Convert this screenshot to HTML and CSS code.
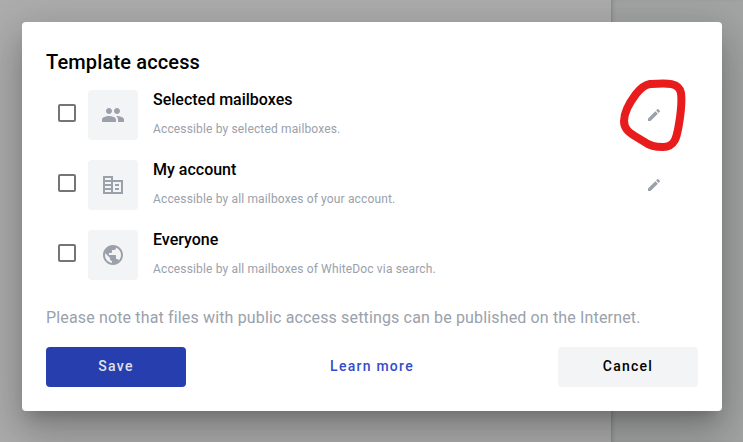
FILE: index.html
```html
<!DOCTYPE html>
<html lang="en">
<head>
<meta charset="utf-8">
<title>Template access</title>
<link rel="stylesheet" href="styles.css">
</head>
<body>
<div class="page"><div class="page-main"></div><div class="page-side"></div></div>
<main class="backdrop">
  <section class="dialog">
    <h1 class="title">Template access</h1>
    <ul class="options">
      <li class="option">
        <span class="checkbox"></span>
        <span class="tile"><svg class="icon" viewBox="0 0 24 24"><path d="M16 11c1.66 0 2.99-1.34 2.99-3S17.66 5 16 5c-1.66 0-3 1.34-3 3s1.34 3 3 3zm-8 0c1.66 0 2.99-1.34 2.99-3S9.66 5 8 5C6.34 5 5 6.34 5 8s1.34 3 3 3zm0 2c-2.33 0-7 1.17-7 3.5V19h14v-2.500c0-2.330-4.670-3.500-7-3.500zm8 0c-.29 0-.62.02-.97.05 1.160.84 1.970 1.970 1.970 3.450V19h6v-2.500c0-2.330-4.670-3.500-7-3.500z"/></svg></span>
        <div class="text"><h2 class="name">Selected mailboxes</h2><p class="hint">Accessible by selected mailboxes.</p></div>
        <span class="edit"><svg class="pencil" viewBox="0 0 24 24"><path d="M3 17.250V21h3.750L17.810 9.940l-3.750-3.750L3 17.250zM20.710 7.040c.39-.39.39-1.020 0-1.410l-2.340-2.340c-.39-.39-1.020-.39-1.410 0l-1.830 1.830 3.750 3.750 1.830-1.830z"/></svg>
          <svg class="marker" viewBox="0 0 70 76"><path d="M34 8C28 9 24 13 20 18C14 26 8 35 8 45C8 56 18 59 27 65C34 70 39 71 47 71C60 71 61 59 63 48C65 36 66 25 65 17C63 6 51 7 34 8Z"/></svg>
        </span>
      </li>
      <li class="option">
        <span class="checkbox"></span>
        <span class="tile"><svg class="icon" viewBox="0 0 24 24"><path fill-rule="evenodd" d="M2 3h10v4h10v14H2zM4 5v2h6V5zM4 9v2h6V9zM4 13v2h6v-2zM4 17v2h6v-2zM12 9v10h8V9zM14 11h4v2h-4zM14 15h4v2h-4z"/></svg></span>
        <div class="text"><h2 class="name">My account</h2><p class="hint">Accessible by all mailboxes of your account.</p></div>
        <span class="edit"><svg class="pencil" viewBox="0 0 24 24"><path d="M3 17.250V21h3.750L17.810 9.940l-3.750-3.750L3 17.250zM20.710 7.040c.39-.39.39-1.020 0-1.410l-2.340-2.340c-.39-.39-1.020-.39-1.410 0l-1.830 1.830 3.750 3.750 1.830-1.830z"/></svg></span>
      </li>
      <li class="option">
        <span class="checkbox"></span>
        <span class="tile"><svg class="icon" viewBox="0 0 24 24"><path d="M12 2C6.480 2 2 6.480 2 12s4.480 10 10 10 10-4.480 10-10S17.520 2 12 2zm-1 17.930c-3.950-.49-7-3.850-7-7.930 0-.62.08-1.210.21-1.790L9 15v1c0 1.100.9 2 2 2v1.930zm6.900-2.540c-.26-.81-1-1.390-1.900-1.390h-1v-3c0-.55-.45-1-1-1H8v-2h2c.55 0 1-.45 1-1V7h2c1.100 0 2-.9 2-2v-.41c2.930 1.190 5 4.060 5 7.410 0 2.080-.8 3.970-2.100 5.390z"/></svg></span>
        <div class="text"><h2 class="name">Everyone</h2><p class="hint">Accessible by all mailboxes of WhiteDoc via search.</p></div>
      </li>
    </ul>
    <p class="note">Please note that files with public access settings can be published on the Internet.</p>
    <div class="actions">
      <button class="button save">Save</button>
      <button class="button learn">Learn more</button>
      <button class="button cancel">Cancel</button>
    </div>
  </section>
</main>
</body>
</html>
```

FILE: styles.css
```css
* { box-sizing: border-box; }
body { margin: 0; height: 442px; overflow: hidden; font-family: Roboto, sans-serif; }
.page { position: absolute; inset: 0; display: flex; }
.page-main { width: 611px; background: #adadad; }
.page-side { flex: 1; background: #a3a5a4; box-shadow: inset 3px 0 4px -2px rgba(0, 0, 0, .2); }
.backdrop { position: relative; padding: 22px; }
.dialog {
  width: 700px; height: 389px; padding: 24px; background: #fff; border-radius: 4px;
  box-shadow: 0 11px 15px -7px rgba(0,0,0,.2), 0 24px 38px 3px rgba(0,0,0,.14), 0 9px 46px 8px rgba(0,0,0,.12);
}
h1, h2, p, ul { margin: 0; padding: 0; }
.title { font-size: 20px; line-height: 32px; font-weight: 500; letter-spacing: .15px; color: #000; }
.options { list-style: none; padding-top: 12px; }
.option { display: flex; height: 70px; align-items: flex-start; padding-left: 12px; }
.checkbox { width: 18px; height: 18px; margin-top: 14px; border: 2px solid #757575; border-radius: 2px; }
.tile { width: 50px; height: 50px; margin-left: 12px; display: flex; align-items: center; justify-content: center; background: #f3f4f6; border-radius: 4px; }
.icon { width: 24px; height: 24px; fill: #9aa1ab; }
.text { flex: 1; margin-left: 15px; }
.name { font-size: 16px; line-height: 20px; font-weight: 500; color: #000; }
.hint { margin-top: 10px; font-size: 12px; line-height: 18px; letter-spacing: .15px; color: #9aa1ab; }
.edit { position: relative; display: flex; margin: 17px 36px 0 0; }
.pencil { width: 16px; height: 16px; fill: #9aa1ab; }
.marker { position: absolute; left: -30px; top: -31px; width: 70px; height: 76px; fill: none; stroke: #e81c1c; stroke-width: 8; }
.note { font-size: 16px; line-height: 24px; letter-spacing: .15px; color: #9aa1ab; margin-top: 6px; }
.actions { display: flex; justify-content: space-between; margin-top: 17px; }
.button { width: 140px; height: 40px; padding: 0 0 2px; border: 0; border-radius: 4px; font: 500 14px Roboto, sans-serif; letter-spacing: 1.25px; }
.save { background: #263eae; color: #e0e1e8; }
.learn { background: none; color: #354bca; }
.cancel { background: #f3f4f6; color: #000; }
```
